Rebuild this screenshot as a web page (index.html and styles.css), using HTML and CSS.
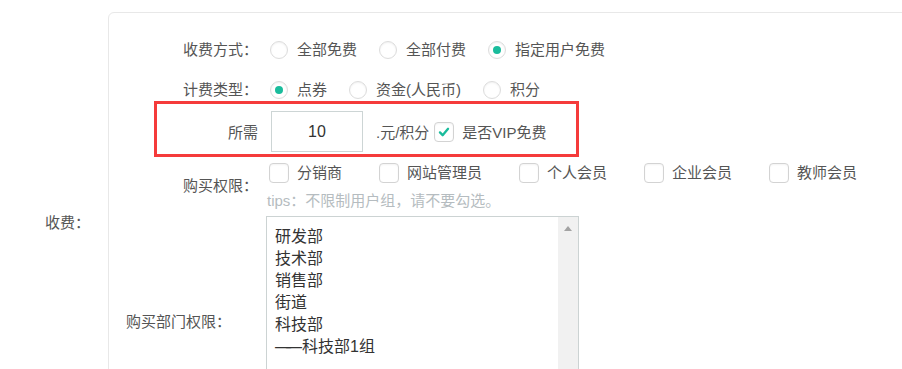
FILE: index.html
```html
<html>
    <head>
        <title>收费设置</title>
        <link rel="stylesheet" href="styles.css">
    </head>
    <body>
        <div class="page">
            <div class="side-label">收费：</div>
            <div class="card">
                <div class="row first">
                    <div class="label">收费方式：</div>
                    <div class="controls">
                        <label class="opt"><span class="radio"></span>全部免费</label>
                        <label class="opt"><span class="radio"></span>全部付费</label>
                        <label class="opt"><span class="radio on"></span>指定用户免费</label>
                    </div>
                </div>
                <div class="row">
                    <div class="label">计费类型：</div>
                    <div class="controls">
                        <label class="opt"><span class="radio on"></span>点券</label>
                        <label class="opt"><span class="radio"></span>资金(人民币)</label>
                        <label class="opt"><span class="radio"></span>积分</label>
                    </div>
                </div>
                <div class="need">
                    <div class="label">所需</div>
                    <input class="amount" type="text" value="10">
                    <span class="unit">.元/积分</span>
                    <span class="checkbox on">
                        <svg width="20" height="20" viewBox="0 0 20 20"><path d="M5.5 10.5l3 3 6-7" fill="none" stroke="#1abc9c" stroke-width="2.6" stroke-linecap="round" stroke-linejoin="round"/></svg>
                    </span>
                    <span class="vip">是否VIP免费</span>
                </div>
                <div class="row perm">
                    <div class="label">购买权限：</div>
                    <div class="perm-col">
                        <div class="checks">
                            <label class="check-opt"><span class="checkbox"></span>分销商</label>
                            <label class="check-opt"><span class="checkbox"></span>网站管理员</label>
                            <label class="check-opt"><span class="checkbox"></span>个人会员</label>
                            <label class="check-opt"><span class="checkbox"></span>企业会员</label>
                            <label class="check-opt"><span class="checkbox"></span>教师会员</label>
                        </div>
                        <div class="tips">tips：不限制用户组，请不要勾选。</div>
                    </div>
                </div>
                <div class="row dept">
                    <div class="label">购买部门权限：</div>
                    <div class="dept-box">
                        <div class="dept-list">
                            <div>研发部</div>
                            <div>技术部</div>
                            <div>销售部</div>
                            <div>街道</div>
                            <div>科技部</div>
                            <div><span class="dash">——</span>科技部1组</div>
                        </div>
                        <div class="scroll">
                            <span class="arrow"></span>
                        </div>
                    </div>
                </div>
            </div>
        </div>
    </body>
</html>
```

FILE: styles.css
```css
html, body {
    margin: 0;
    height: 100%;
    overflow: hidden;
}
body {
    font-family: "Liberation Sans", "Noto Sans CJK SC", sans-serif;
    font-size: 15px;
    color: #555;
    background-color: #fff;
}
.page {
    display: flex;
    align-items: center;
    padding-top: 12px;
    width: 1100px;
}
.side-label {
    width: 108px;
    box-sizing: border-box;
    padding-right: 18px;
    text-align: right;
    flex-shrink: 0;
}
.card {
    width: 900px;
    flex-shrink: 0;
    border: 1px solid #e8e8e8;
    border-radius: 6px;
    padding: 26px 0 1px 0;
}
.row {
    display: flex;
    align-items: center;
    line-height: 22px;
}
.row.first {
    margin-bottom: 18px;
}
.label {
    width: 149px;
    box-sizing: border-box;
    text-align: right;
    flex-shrink: 0;
}
.controls {
    display: flex;
    align-items: center;
    margin-left: 12px;
}
.opt {
    display: flex;
    align-items: center;
    margin-right: 22px;
}
.radio {
    width: 18px;
    height: 18px;
    box-sizing: border-box;
    border: 1px solid #dcdcdc;
    border-radius: 50%;
    margin-right: 9px;
    display: flex;
    align-items: center;
    justify-content: center;
    box-shadow: inset 0 1px 2px rgba(0, 0, 0, 0.06);
}
.radio.on::after {
    content: "";
    width: 8px;
    height: 8px;
    border-radius: 50%;
    background-color: #1abc9c;
}
.need {
    margin-left: 45px;
    width: 425px;
    height: 56px;
    box-sizing: border-box;
    border: 3px solid #f53b3b;
    padding-top: 5px;
    display: flex;
    align-items: center;
}
.need .label {
    width: 101px;
}
.amount {
    margin-left: 13px;
    width: 92px;
    height: 41px;
    box-sizing: border-box;
    border: 1px solid #cdd5d5;
    text-align: center;
    font-family: "Liberation Sans", sans-serif;
    font-size: 16px;
    color: #333;
    outline: none;
}
.unit {
    margin-left: 13px;
}
.checkbox {
    width: 20px;
    height: 20px;
    box-sizing: border-box;
    border: 1px solid #d3d3d3;
    border-radius: 4px;
    display: flex;
    align-items: center;
    justify-content: center;
    box-shadow: inset 0 1px 2px rgba(0, 0, 0, 0.05);
    flex-shrink: 0;
}
.checkbox svg {
    display: block;
}
.need .checkbox {
    margin-left: 5px;
}
.vip {
    margin-left: 8px;
}
.perm-col {
    margin-left: 11px;
}
.perm {
    margin-top: 5px;
}
.checks {
    display: flex;
    align-items: center;
    height: 22px;
}
.check-opt {
    display: flex;
    align-items: center;
    margin-right: 37px;
}
.check-opt .checkbox {
    margin-right: 8px;
}
.tips {
    margin-top: 8px;
    margin-left: -2px;
    line-height: 18px;
    color: #b5bcc0;
}
.dept {
    margin-top: 6px;
}
.dept .label {
    padding-right: 27px;
}
.dept-box {
    margin-left: 8px;
    width: 313px;
    height: 212px;
    box-sizing: border-box;
    border: 1px solid #ccd3d3;
    display: flex;
}
.dept-list {
    flex: 1;
    padding: 9px 0 0 8px;
    font-size: 16px;
    line-height: 22px;
    color: #333;
}
.dash {
    letter-spacing: -5px;
    margin-right: 5px;
}
.scroll {
    width: 20px;
    background-color: #f1f1f1;
    display: flex;
    justify-content: center;
}
.arrow {
    margin-top: 9px;
    width: 0;
    height: 0;
    border-left: 4.5px solid transparent;
    border-right: 4.5px solid transparent;
    border-bottom: 5px solid #a3a3a3;
}
```
